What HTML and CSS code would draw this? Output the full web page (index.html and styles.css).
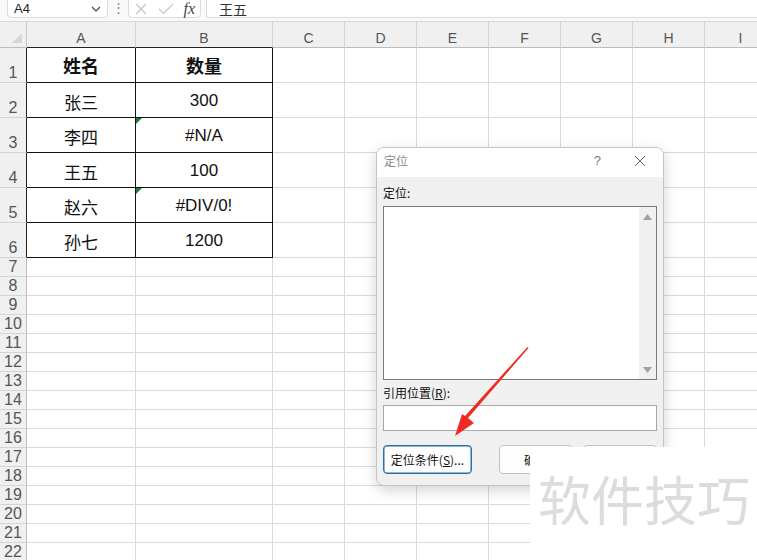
FILE: index.html
```html
<!DOCTYPE html>
<html lang="zh-CN">
<head>
<meta charset="utf-8">
<link rel="stylesheet" href="styles.css">
</head>
<body>
<div class="app">
  <div class="toolbar">
    <div class="namebox"><span>A4</span>
      <svg class="chev" width="10" height="6" viewBox="0 0 10 6"><path d="M1 1l4 4 4-4" fill="none" stroke="#444" stroke-width="1.2"/></svg>
    </div>
    <div class="dots">⋮</div>
    <div class="fxbox">
      <svg width="14" height="14" viewBox="0 0 14 14"><path d="M2 2l10 10M12 2L2 12" stroke="#c4c4c4" stroke-width="1.1"/></svg>
      <svg width="16" height="14" viewBox="0 0 16 14"><path d="M1 7l4.5 4.5L15 2" fill="none" stroke="#c4c4c4" stroke-width="1.1"/></svg>
      <span class="fx">fx</span>
    </div>
    <div class="formula">王五</div>
  </div>

  <div class="sheet">
    <div class="corner"><svg width="10" height="10" viewBox="0 0 10 10"><path d="M10 0V10H0z" fill="#d6d6d6"/></svg></div>
    <div class="ch tb">A</div><div class="ch tb">B</div><div class="ch">C</div><div class="ch">D</div><div class="ch">E</div><div class="ch">F</div><div class="ch">G</div><div class="ch">H</div><div class="ch">I</div>

    <div class="rh big tl">1</div><div class="c big t hd">姓名</div><div class="c big t hd">数量</div><div class="c big"></div><div class="c big"></div><div class="c big"></div><div class="c big"></div><div class="c big"></div><div class="c big"></div><div class="c big"></div>
    <div class="rh big tl">2</div><div class="c big t">张三</div><div class="c big t">300</div><div class="c big"></div><div class="c big"></div><div class="c big"></div><div class="c big"></div><div class="c big"></div><div class="c big"></div><div class="c big"></div>
    <div class="rh big tl">3</div><div class="c big t">李四</div><div class="c big t err">#N/A</div><div class="c big"></div><div class="c big"></div><div class="c big"></div><div class="c big"></div><div class="c big"></div><div class="c big"></div><div class="c big"></div>
    <div class="rh big tl">4</div><div class="c big t">王五</div><div class="c big t">100</div><div class="c big"></div><div class="c big"></div><div class="c big"></div><div class="c big"></div><div class="c big"></div><div class="c big"></div><div class="c big"></div>
    <div class="rh big tl">5</div><div class="c big t">赵六</div><div class="c big t err">#DIV/0!</div><div class="c big"></div><div class="c big"></div><div class="c big"></div><div class="c big"></div><div class="c big"></div><div class="c big"></div><div class="c big"></div>
    <div class="rh big tl">6</div><div class="c big t">孙七</div><div class="c big t">1200</div><div class="c big"></div><div class="c big"></div><div class="c big"></div><div class="c big"></div><div class="c big"></div><div class="c big"></div><div class="c big"></div>

    <div class="rh">7</div><div class="c"></div><div class="c"></div><div class="c"></div><div class="c"></div><div class="c"></div><div class="c"></div><div class="c"></div><div class="c"></div><div class="c"></div>
    <div class="rh">8</div><div class="c"></div><div class="c"></div><div class="c"></div><div class="c"></div><div class="c"></div><div class="c"></div><div class="c"></div><div class="c"></div><div class="c"></div>
    <div class="rh">9</div><div class="c"></div><div class="c"></div><div class="c"></div><div class="c"></div><div class="c"></div><div class="c"></div><div class="c"></div><div class="c"></div><div class="c"></div>
    <div class="rh">10</div><div class="c"></div><div class="c"></div><div class="c"></div><div class="c"></div><div class="c"></div><div class="c"></div><div class="c"></div><div class="c"></div><div class="c"></div>
    <div class="rh">11</div><div class="c"></div><div class="c"></div><div class="c"></div><div class="c"></div><div class="c"></div><div class="c"></div><div class="c"></div><div class="c"></div><div class="c"></div>
    <div class="rh">12</div><div class="c"></div><div class="c"></div><div class="c"></div><div class="c"></div><div class="c"></div><div class="c"></div><div class="c"></div><div class="c"></div><div class="c"></div>
    <div class="rh">13</div><div class="c"></div><div class="c"></div><div class="c"></div><div class="c"></div><div class="c"></div><div class="c"></div><div class="c"></div><div class="c"></div><div class="c"></div>
    <div class="rh">14</div><div class="c"></div><div class="c"></div><div class="c"></div><div class="c"></div><div class="c"></div><div class="c"></div><div class="c"></div><div class="c"></div><div class="c"></div>
    <div class="rh">15</div><div class="c"></div><div class="c"></div><div class="c"></div><div class="c"></div><div class="c"></div><div class="c"></div><div class="c"></div><div class="c"></div><div class="c"></div>
    <div class="rh">16</div><div class="c"></div><div class="c"></div><div class="c"></div><div class="c"></div><div class="c"></div><div class="c"></div><div class="c"></div><div class="c"></div><div class="c"></div>
    <div class="rh">17</div><div class="c"></div><div class="c"></div><div class="c"></div><div class="c"></div><div class="c"></div><div class="c"></div><div class="c"></div><div class="c"></div><div class="c"></div>
    <div class="rh">18</div><div class="c"></div><div class="c"></div><div class="c"></div><div class="c"></div><div class="c"></div><div class="c"></div><div class="c"></div><div class="c"></div><div class="c"></div>
    <div class="rh">19</div><div class="c"></div><div class="c"></div><div class="c"></div><div class="c"></div><div class="c"></div><div class="c"></div><div class="c"></div><div class="c"></div><div class="c"></div>
    <div class="rh">20</div><div class="c"></div><div class="c"></div><div class="c"></div><div class="c"></div><div class="c"></div><div class="c"></div><div class="c"></div><div class="c"></div><div class="c"></div>
    <div class="rh">21</div><div class="c"></div><div class="c"></div><div class="c"></div><div class="c"></div><div class="c"></div><div class="c"></div><div class="c"></div><div class="c"></div><div class="c"></div>
    <div class="rh">22</div><div class="c"></div><div class="c"></div><div class="c"></div><div class="c"></div><div class="c"></div><div class="c"></div><div class="c"></div><div class="c"></div><div class="c"></div>
  </div>

  <div class="dialog">
    <div class="dtitle">
      <span class="dname">定位</span>
      <span class="help">?</span>
      <svg class="close" width="12" height="12" viewBox="0 0 12 12"><path d="M1 1l10 10M11 1L1 11" stroke="#666" stroke-width="1"/></svg>
    </div>
    <div class="dbody">
      <div class="lbl">定位:</div>
      <div class="listbox">
        <div class="listarea"></div>
        <div class="vscroll">
          <svg width="9" height="6" viewBox="0 0 9 6"><path d="M0 6L4.5 0 9 6z" fill="#a0a0a0"/></svg>
          <svg width="9" height="6" viewBox="0 0 9 6"><path d="M0 0L4.5 6 9 0z" fill="#a0a0a0"/></svg>
        </div>
      </div>
      <div class="lbl ref">引用位置(<u>R</u>):</div>
      <div class="input"></div>
      <div class="btns">
        <div class="btn primary">定位条件(<u>S</u>)...</div>
        <div class="btn ok">确定</div>
        <div class="btn ok"></div>
      </div>
    </div>
  </div>

  <svg class="arrow" width="757" height="560" viewBox="0 0 757 560">
    <path d="M527.5 347 L528.5 348 L468 418 L474 423 L455 436 L462 414 L465 416 Z" fill="#f02a22"/>
  </svg>

  <div class="watermark">软件技巧</div>
</div>
</body>
</html>
```

FILE: styles.css
```css
* { box-sizing: border-box; }
html, body { margin: 0; padding: 0; }
body {
  width: 757px;
  height: 560px;
  overflow: hidden;
  background: #fff;
  font-family: "Liberation Sans", "Noto Sans CJK SC", sans-serif;
}
.app {
  position: relative;
  width: 757px;
  height: 560px;
  overflow: hidden;
  display: flex;
  flex-direction: column;
}
.toolbar {
  height: 22px;
  flex: none;
  background: #f9f9f9;
  display: flex;
  align-items: flex-start;
  padding: 0 0 0 7px;
  border-bottom: 1px solid #d8d8d8;
  overflow: hidden;
}
.namebox {
  flex: none;
  width: 101px;
  height: 23px;
  margin-top: -5px;
  background: #fff;
  border: 1px solid #dcdcdc;
  border-radius: 4px;
  display: flex;
  align-items: center;
  justify-content: space-between;
  padding: 4px 6px 0 6px;
  font-size: 13px;
  color: #222;
}
.dots {
  flex: none;
  width: 20px;
  text-align: center;
  color: #888;
  font-size: 13px;
  line-height: 16px;
}
.fxbox {
  flex: none;
  width: 73px;
  height: 23px;
  margin-top: -5px;
  background: #fff;
  border: 1px solid #dcdcdc;
  border-radius: 4px;
  display: flex;
  align-items: center;
  justify-content: space-between;
  padding: 4px 5px 0 5px;
}
.fx {
  font-family: "Liberation Serif", serif;
  font-style: italic;
  font-size: 16px;
  line-height: 16px;
  color: #444;
}
.formula {
  flex: 1;
  height: 23px;
  margin-top: -5px;
  margin-left: 5px;
  background: #fff;
  border: 1px solid #dcdcdc;
  border-right: none;
  border-radius: 4px 0 0 4px;
  padding: 4px 0 0 12px;
  display: flex;
  align-items: center;
  font-size: 14px;
  color: #333;
}
.sheet {
  display: grid;
  grid-template-columns: 27px 109px 137px repeat(7, 72px);
  grid-template-rows: 26px repeat(6, 35px) repeat(16, 19px);
}
.corner {
  background: #f0f0f0;
  border-right: 1px solid #c8c8c8;
  border-bottom: 1px solid #bdbdbd;
  display: flex;
  align-items: flex-end;
  justify-content: flex-end;
  padding: 0 4px 4px 0;
}
.ch {
  background: #f0f0f0;
  border-right: 1px solid #d4d4d4;
  border-bottom: 1px solid #bdbdbd;
  display: flex;
  align-items: center;
  justify-content: center;
  font-size: 14px;
  color: #555;
  padding-top: 7px;
}
.ch.tb { border-bottom-color: #222; }
.rh {
  background: #f0f0f0;
  border-right: 1px solid #bdbdbd;
  border-bottom: 1px solid #d4d4d4;
  display: flex;
  align-items: flex-end;
  justify-content: center;
  font-size: 16px;
  line-height: 18px;
  color: #555;
  padding-bottom: 0;
}
.rh.tl { border-right-color: #222; }
.c {
  border-right: 1px solid #dadada;
  border-bottom: 1px solid #dadada;
  display: flex;
  align-items: center;
  justify-content: center;
  font-size: 17px;
  color: #111;
  position: relative;
}
.c.t { border-right-color: #111; border-bottom-color: #111; padding-top: 2px; }
.c.hd { font-weight: bold; font-size: 18px; padding-top: 0; }
.c.err::before {
  content: "";
  position: absolute;
  left: 0;
  top: 0;
  border-top: 6px solid #1f7a33;
  border-right: 6px solid transparent;
}
.dialog {
  position: absolute;
  left: 376px;
  top: 147px;
  width: 288px;
  height: 339px;
  border: 1px solid #c4c4c4;
  border-radius: 8px;
  background: #f0f0f0;
  box-shadow: 0 4px 14px rgba(0,0,0,0.18);
  overflow: hidden;
  display: flex;
  flex-direction: column;
  font-family: "Noto Sans CJK SC", "Liberation Sans", sans-serif;
  font-size: 12px;
  color: #111;
}
.dtitle {
  height: 29px;
  background: #fff;
  display: flex;
  align-items: center;
  padding: 0 17px 4px 7px;
  flex: none;
}
.dname { color: #8a8a8a; flex: 1; }
.help { color: #777; font-size: 13px; margin-right: 33px; font-family: "Liberation Sans", sans-serif; }
.dbody {
  flex: 1;
  padding: 7px 6px 0 6px;
  display: flex;
  flex-direction: column;
}
.lbl { height: 17px; line-height: 17px; }
.listbox {
  margin-top: 5px;
  height: 174px;
  border: 1px solid #7a7a7a;
  background: #fff;
  display: flex;
  flex: none;
}
.listarea { flex: 1; }
.vscroll {
  width: 17px;
  background: #f0f0f0;
  display: flex;
  flex-direction: column;
  justify-content: space-between;
  align-items: center;
  padding: 7px 0 6px 0;
}
.ref { margin-top: 4px; }
.input {
  margin-top: 4px;
  height: 26px;
  border: 1px solid #a8a8a8;
  background: #fff;
  flex: none;
}
.btns {
  margin-top: 14px;
  display: flex;
  gap: 27px;
}
.btn {
  flex: none;
  width: 89px;
  height: 29px;
  border: 1px solid #c2c2c2;
  border-radius: 4px;
  background: #fdfdfd;
  display: flex;
  align-items: center;
  justify-content: center;
  white-space: nowrap;
}
.btn.ok { width: 74px; }
.btns .btn.ok + .btn.ok { margin-left: -17px; }
.btn.primary { border: 1px solid #2a6fa8; box-shadow: inset 0 0 0 0.5px #2a6fa8; }
.arrow {
  position: absolute;
  left: 0;
  top: 0;
  pointer-events: none;
}
.watermark {
  position: absolute;
  left: 530px;
  top: 447px;
  width: 227px;
  height: 113px;
  background: #fff;
  color: #dcdcdc;
  font-family: "Noto Sans CJK SC", sans-serif;
  font-size: 53px;
  line-height: 53px;
  padding: 25px 0 0 8px;
  white-space: nowrap;
}
```
